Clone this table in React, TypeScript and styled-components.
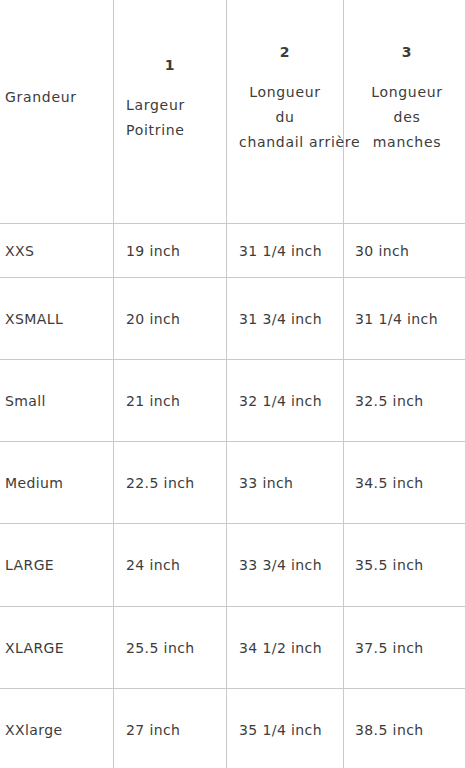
import React from "react";
import styled, { createGlobalStyle } from "styled-components";

const Global = createGlobalStyle`
  html, body { margin: 0; padding: 0; background: #ffffff; overflow: hidden; }
  body { font-family: "DejaVu Sans", "Open Sans", sans-serif; }
`;

const Table = styled.table`
  border-collapse: separate;
  border-spacing: 0;
  table-layout: fixed;
  width: 470px;
  color: #3c3c3c;
  font-family: "DejaVu Sans", "Open Sans", sans-serif;
  font-size: 14px;
  letter-spacing: 0.7px;
`;

const HeadCell = styled.th<{ $last?: boolean }>`
  height: 195px;
  padding: 0 0 28px 0;
  vertical-align: middle;
  font-weight: normal;
  line-height: 25px;
  border-bottom: 1px solid #c9c9c9;
  border-right: ${(p) => (p.$last ? "none" : "1px solid #c9c9c9")};
  white-space: nowrap;
  overflow: visible;
`;

const Num = styled.div`
  font-weight: bold;
  text-align: center;
  margin-bottom: 15px;
`;

const Label = styled.div<{ $align: "left" | "center"; $pad: number }>`
  text-align: ${(p) => p.$align};
  padding: 0 ${(p) => (p.$align === "center" ? p.$pad : 0)}px 0 ${(p) => p.$pad}px;
`;

const Cell = styled.td<{ $pad: number; $h: number; $last?: boolean }>`
  height: ${(p) => p.$h}px;
  padding: 0 0 0 ${(p) => p.$pad}px;
  vertical-align: middle;
  line-height: 20px;
  letter-spacing: 0.4px;
  border-bottom: 1px solid #c9c9c9;
  border-right: ${(p) => (p.$last ? "none" : "1px solid #c9c9c9")};
  white-space: nowrap;
`;

const rows: { h: number; v: string[] }[] = [
  { h: 53, v: ["XXS", "19 inch", "31 1/4 inch", "30 inch"] },
  { h: 81, v: ["XSMALL", "20 inch", "31 3/4 inch", "31 1/4 inch"] },
  { h: 81, v: ["Small", "21 inch", "32 1/4 inch", "32.5 inch"] },
  { h: 81, v: ["Medium", "22.5 inch", "33 inch", "34.5 inch"] },
  { h: 82, v: ["LARGE", "24 inch", "33 3/4 inch", "35.5 inch"] },
  { h: 81, v: ["XLARGE", "25.5 inch", "34 1/2 inch", "37.5 inch"] },
  { h: 81, v: ["XXlarge", "27 inch", "35 1/4 inch", "38.5 inch"] },
];

const pads = [5, 12, 12, 11];

export default function App() {
  return (
    <>
      <Global />
      <Table>
        <colgroup>
          <col style={{ width: 114 }} />
          <col style={{ width: 113 }} />
          <col style={{ width: 117 }} />
          <col style={{ width: 126 }} />
        </colgroup>
        <thead>
          <tr>
            <HeadCell>
              <Label $align="left" $pad={5}>Grandeur</Label>
            </HeadCell>
            <HeadCell>
              <Num>1</Num>
              <Label $align="left" $pad={12}>
                Largeur
                <br />
                Poitrine
              </Label>
            </HeadCell>
            <HeadCell>
              <Num>2</Num>
              <Label $align="center" $pad={12}>
                Longueur
                <br />
                du
                <br />
                chandail arrière
              </Label>
            </HeadCell>
            <HeadCell $last>
              <Num>3</Num>
              <Label $align="center" $pad={12}>
                Longueur
                <br />
                des
                <br />
                manches
              </Label>
            </HeadCell>
          </tr>
        </thead>
        <tbody>
          {rows.map((r) => (
            <tr key={r.v[0]}>
              {r.v.map((t, i) => (
                <Cell key={i} $pad={pads[i]} $h={r.h} $last={i === 3}>
                  {t}
                </Cell>
              ))}
            </tr>
          ))}
        </tbody>
      </Table>
    </>
  );
}
